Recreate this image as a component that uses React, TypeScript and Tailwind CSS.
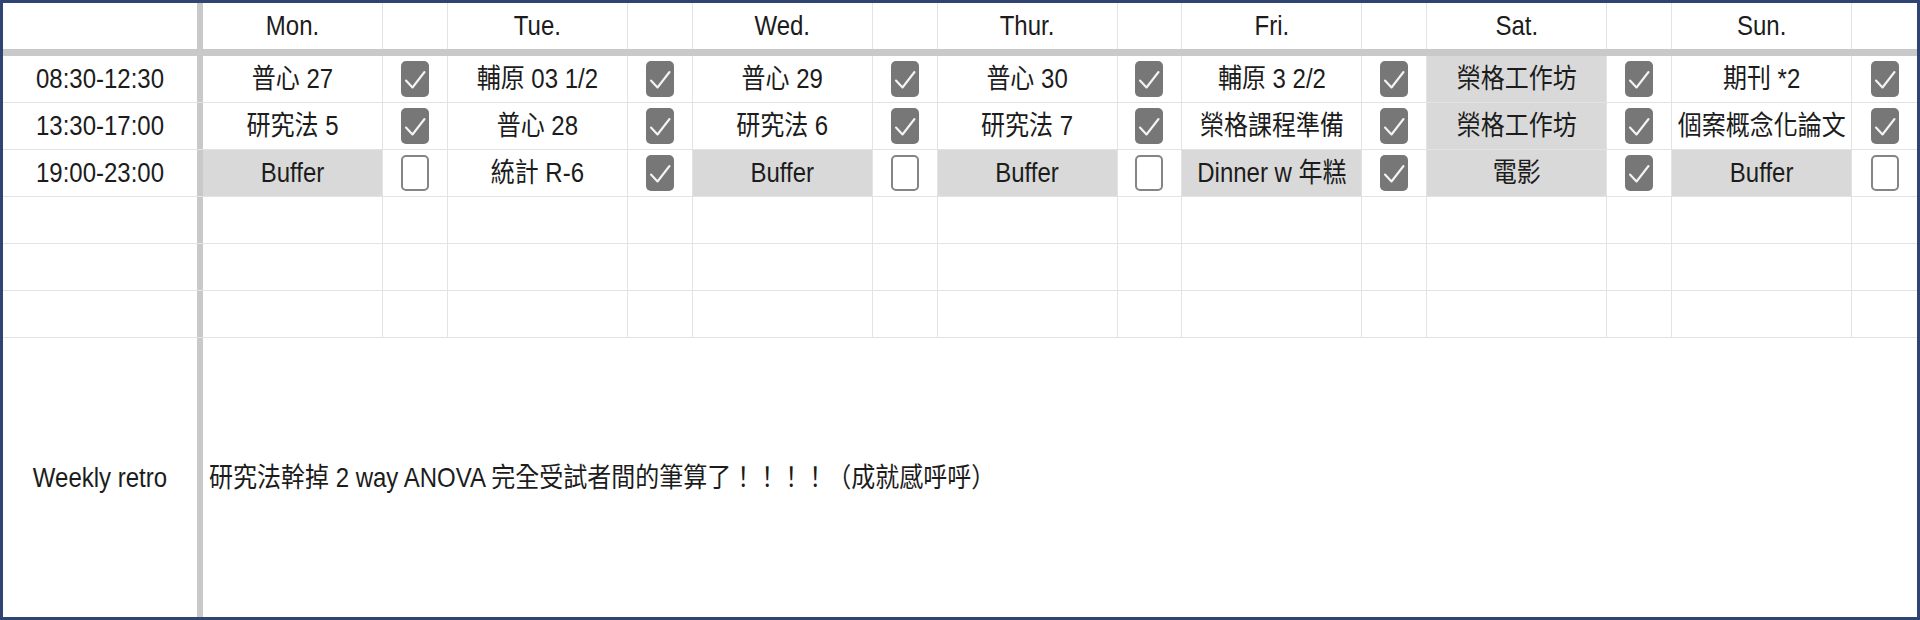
const days = ['Mon.', 'Tue.', 'Wed.', 'Thur.', 'Fri.', 'Sat.', 'Sun.'];

type Slot = { text: string; done: boolean; shaded?: boolean };

const slots: { time: string; cells: Slot[] }[] = [
  {
    time: '08:30-12:30',
    cells: [
      { text: '普心 27', done: true },
      { text: '輔原 03 1/2', done: true },
      { text: '普心 29', done: true },
      { text: '普心 30', done: true },
      { text: '輔原 3 2/2', done: true },
      { text: '榮格工作坊', done: true, shaded: true },
      { text: '期刊 *2', done: true },
    ],
  },
  {
    time: '13:30-17:00',
    cells: [
      { text: '研究法 5', done: true },
      { text: '普心 28', done: true },
      { text: '研究法 6', done: true },
      { text: '研究法 7', done: true },
      { text: '榮格課程準備', done: true },
      { text: '榮格工作坊', done: true, shaded: true },
      { text: '個案概念化論文', done: true },
    ],
  },
  {
    time: '19:00-23:00',
    cells: [
      { text: 'Buffer', done: false, shaded: true },
      { text: '統計 R-6', done: true },
      { text: 'Buffer', done: false, shaded: true },
      { text: 'Buffer', done: false, shaded: true },
      { text: 'Dinner w 年糕', done: true, shaded: true },
      { text: '電影', done: true, shaded: true },
      { text: 'Buffer', done: false, shaded: true },
    ],
  },
];

const cols = 'grid grid-cols-[194px_6px_repeat(7,180px_minmax(0,1fr))]';

// the source sheet was captured slightly stretched vertically
function Txt({ children }: { children?: React.ReactNode }) {
  return <span className="inline-block scale-y-[1.12]">{children}</span>;
}

function CheckBox({ checked }: { checked: boolean }) {
  if (!checked) {
    return <div className="h-[36px] w-[28px] rounded-[5px] border-2 border-[#858585] bg-white" />;
  }
  return (
    <div className="h-[36px] w-[28px] rounded-[5px] bg-[#777777]">
      <svg viewBox="0 0 28 36" className="h-full w-full">
        <path d="M5 19.5 L11.5 26.5 L23.5 11" fill="none" stroke="#f4f4f4" strokeWidth="2.1" strokeLinecap="round" strokeLinejoin="round" />
      </svg>
    </div>
  );
}

function Row({ time, cells }: { time?: string; cells?: Slot[] }) {
  return (
    <div className={`${cols} h-[47px] border-b border-[#e3e3e3]`}>
      <div className="flex items-center justify-center">
        <Txt>{time}</Txt>
      </div>
      <div className="bg-[#c9c9c9]" />
      {days.map((d, i) => {
        const c = cells?.[i];
        return [
          <div
            key={d + 't'}
            className={`flex items-center justify-center border-r border-[#e3e3e3] ${c?.shaded ? 'bg-[#d9d9d9]' : ''}`}
          >
            <Txt>{c?.text}</Txt>
          </div>,
          <div key={d + 'c'} className={`flex items-center justify-center ${i < 6 ? 'border-r border-[#e3e3e3]' : ''}`}>
            {c && <CheckBox checked={c.done} />}
          </div>,
        ];
      })}
    </div>
  );
}

export default function App() {
  return (
    <div className="flex h-[620px] w-[1920px] flex-col border-[3px] border-[#2f4470] bg-white font-['Liberation_Sans','Noto_Sans_CJK_TC',sans-serif] text-[24px] text-[#1c1c1c]">
      <div className={`${cols} h-[46px]`}>
        <div />
        <div className="bg-[#c9c9c9]" />
        {days.map((d, i) => [
          <div key={d} className="flex items-center justify-center border-r border-[#e3e3e3]">
            <Txt>{d}</Txt>
          </div>,
          <div key={d + 'c'} className={i < 6 ? 'border-r border-[#e3e3e3]' : ''} />,
        ])}
      </div>
      <div className="h-[7px] bg-[#c9c9c9]" />
      {slots.map((s) => (
        <Row key={s.time} time={s.time} cells={s.cells} />
      ))}
      <Row />
      <Row />
      <Row />
      <div className="grid flex-1 grid-cols-[194px_6px_1fr]">
        <div className="flex items-center justify-center">
          <Txt>Weekly retro</Txt>
        </div>
        <div className="bg-[#c9c9c9]" />
        <div className="flex items-center pl-[6px]">
          <Txt>研究法幹掉 2 way ANOVA 完全受試者間的筆算了！！！！（成就感呼呼）</Txt>
        </div>
      </div>
    </div>
  );
}
